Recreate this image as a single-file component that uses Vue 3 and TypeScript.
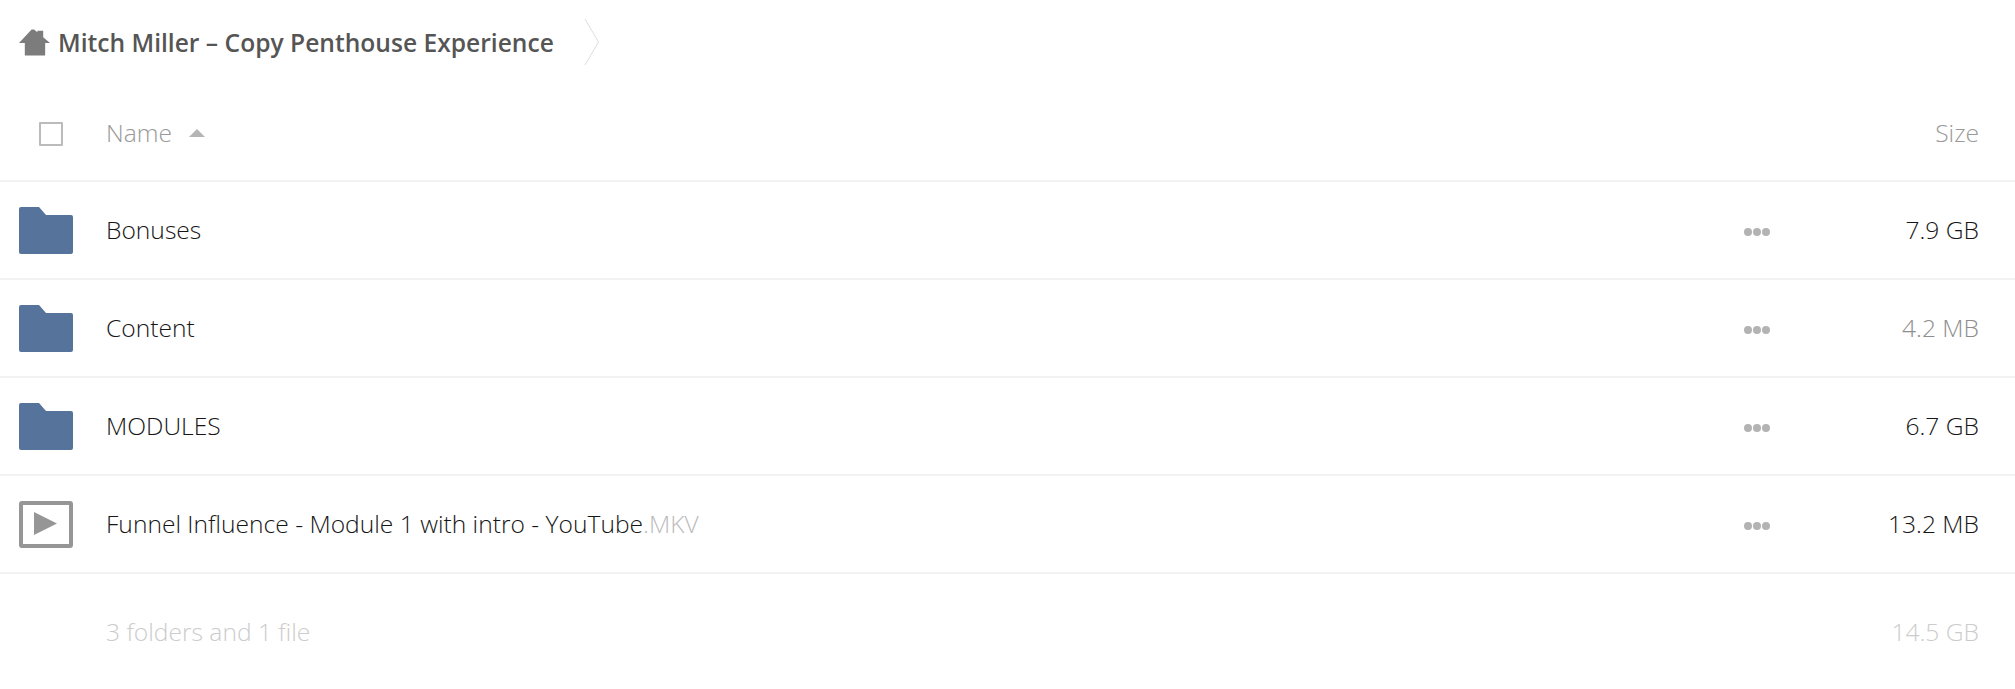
<script setup lang="ts">
interface Entry {
  name: string;
  ext?: string;
  kind: 'folder' | 'video';
  size: string;
  dim?: boolean;
}

const entries: Entry[] = [
  { name: 'Bonuses', kind: 'folder', size: '7.9 GB' },
  { name: 'Content', kind: 'folder', size: '4.2 MB', dim: true },
  { name: 'MODULES', kind: 'folder', size: '6.7 GB' },
  { name: 'Funnel Influence - Module 1 with intro - YouTube', ext: '.MKV', kind: 'video', size: '13.2 MB' },
];
</script>

<template>
  <div class="page">
    <nav class="crumbs">
      <svg class="home" viewBox="0 0 32 28" aria-hidden="true">
        <path d="M0 15 L13 1 L15.500 1 L19 4 L19 2.500 L25 2.500 L25 9 L32 15 L27 15 L27 28 L6 28 L6 15 Z" />
      </svg>
      <span class="crumb-title">Mitch Miller – Copy Penthouse Experience</span>
      <svg class="crumb-sep" viewBox="0 0 16 46" aria-hidden="true">
        <path d="M1 0 L14.500 23 L1 46" />
      </svg>
    </nav>

    <div class="head row-grid">
      <div class="cell-icon"><span class="checkbox"></span></div>
      <div class="head-name">
        Name
        <span class="sort-arrow"></span>
      </div>
      <div></div>
      <div class="cell-size">Size</div>
    </div>

    <div v-for="entry in entries" :key="entry.name" class="row row-grid">
      <div class="cell-icon">
        <svg v-if="entry.kind === 'folder'" class="file-icon" viewBox="0 0 54 47" aria-hidden="true">
          <path fill="#55739b" d="M2 0 H20 L27 8 H52 a2 2 0 0 1 2 2 V45 a2 2 0 0 1 -2 2 H2 a2 2 0 0 1 -2 -2 V2 a2 2 0 0 1 2 -2 Z" />
        </svg>
        <svg v-else class="file-icon" viewBox="0 0 54 47" aria-hidden="true">
          <rect x="2" y="2" width="50" height="43" rx="1" fill="none" stroke="#969696" stroke-width="4" />
          <path fill="#969696" d="M15 11 L38 22.500 L15 34 Z" />
        </svg>
      </div>
      <div class="cell-name">{{ entry.name }}<span v-if="entry.ext" class="ext">{{ entry.ext }}</span></div>
      <div class="dots"><i></i><i></i><i></i></div>
      <div class="cell-size" :class="{ dim: entry.dim }">{{ entry.size }}</div>
    </div>

    <div class="summary row-grid">
      <div></div>
      <div>3 folders and 1 file</div>
      <div></div>
      <div class="cell-size">14.5 GB</div>
    </div>
  </div>
</template>

<style>
html,
body {
  margin: 0;
  background: #fff;
}
</style>

<style scoped>
.page {
  font-family: 'Open Sans', 'Noto Sans', sans-serif;
  font-weight: 300;
  font-size: 24.6px;
  line-height: 34px;
  color: #161616;
  height: 689px;
  overflow: hidden;
}
.crumbs {
  height: 84px;
  display: flex;
  align-items: center;
  padding-left: 19px;
}
.home {
  width: 31px;
  height: 28px;
  fill: #7c7c7c;
}
.crumb-title {
  margin-left: 8px;
  margin-top: 2px;
  font-weight: 600;
  color: #555;
}
.crumb-sep {
  width: 16px;
  height: 46px;
  margin-left: 30px;
  fill: none;
  stroke: #ddd;
  stroke-width: 1;
}
.row-grid {
  display: grid;
  grid-template-columns: 106px 1fr 26px 209px;
  align-items: center;
  padding-right: 36px;
}
.head {
  height: 94px;
  padding-top: 2px;
  border-bottom: 2px solid #f2f2f2;
  color: #999;
}
.cell-icon {
  display: flex;
  align-items: center;
  padding-left: 19px;
}
.checkbox {
  width: 20px;
  height: 20px;
  margin-left: 20px;
  margin-top: 2px;
  border: 2px solid #bbb;
  border-radius: 1px;
}
.head-name {
  display: flex;
  align-items: center;
  gap: 17px;
}
.sort-arrow {
  width: 0;
  height: 0;
  border-left: 8px solid transparent;
  border-right: 8px solid transparent;
  border-bottom: 8px solid #b5b5b5;
}
.row {
  height: 96px;
  border-bottom: 2px solid #f2f2f2;
}
.file-icon {
  width: 54px;
  height: 47px;
}
.ext {
  color: #bbb;
}
.dots {
  display: flex;
  gap: 1px;
  margin-top: 4px;
}
.dots i {
  width: 8px;
  height: 8px;
  border-radius: 50%;
  background: #b3b3b3;
}
.cell-size {
  text-align: right;
}
.head .cell-size {
  color: #999;
}
.dim {
  color: #8e8e8e;
}
.summary {
  height: 116px;
  color: #ccc;
}
</style>
